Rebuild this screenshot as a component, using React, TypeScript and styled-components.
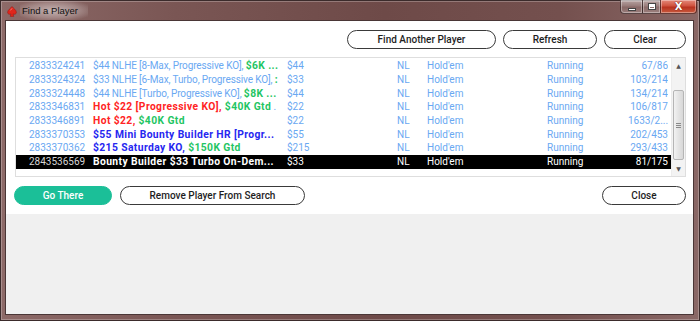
import React from 'react';
import styled, { createGlobalStyle } from 'styled-components';

const Global = createGlobalStyle`
  html, body { margin: 0; padding: 0; overflow: hidden; background: #6f4b4a; }
  #root { width: 700px; height: 321px; }
  * { box-sizing: border-box; }
`;

const Window = styled.div`
  width: 700px;
  height: 321px;
  display: flex;
  flex-direction: column;
  border: 1px solid #3b2b2b;
  background: linear-gradient(90deg, #8d6a68 0%, #7a5654 25%, #6e4a48 55%, #74504e 80%, #8a6866 100%);
  box-shadow: inset 0 0 0 1px rgba(255, 255, 255, 0.25);
`;

const TitleBar = styled.div`
  height: 19px;
  display: flex;
  align-items: flex-start;
  padding-left: 6px;
  padding-right: 2px;
`;

const TitleText = styled.span`
  font-family: "Liberation Sans", Arial, sans-serif;
  font-size: 9.5px;
  color: #111;
  line-height: 19px;
  margin-left: 3px;
  padding: 0 10px 0 2px;
  background: radial-gradient(ellipse at center, rgba(255,255,255,0.5) 0%, rgba(255,255,255,0.22) 55%, rgba(255,255,255,0) 85%);
`;

const Spade = styled.svg`
  width: 10px;
  height: 11px;
  margin-top: 5px;
`;

const Controls = styled.div`
  margin-left: auto;
  display: flex;
  height: 14px;
  margin-top: -1px;
`;

const CtrlButton = styled.div<{ $w: number; $close?: boolean }>`
  width: ${p => p.$w}px;
  height: 14px;
  display: flex;
  align-items: center;
  justify-content: center;
  border: 1px solid rgba(50, 30, 30, 0.7);
  border-top: none;
  margin-left: -1px;
  background: ${p => p.$close
    ? 'linear-gradient(180deg, #e4897a 0%, #d0533f 45%, #b8321f 55%, #c85a3e 100%)'
    : 'linear-gradient(180deg, rgba(255,255,255,0.45) 0%, rgba(255,255,255,0.2) 45%, rgba(255,255,255,0.08) 55%, rgba(255,255,255,0.2) 100%)'};
  border-radius: ${p => p.$close ? '0 0 4px 0' : '0'};
  &:first-child { border-radius: 0 0 0 4px; }
  box-shadow: inset 0 0 0 1px rgba(255,255,255,0.35);
`;

const MinGlyph = styled.div`
  width: 8px;
  height: 3px;
  margin-top: 5px;
  background: #fff;
  border: 1px solid #444;
`;

const MaxGlyph = styled.div`
  width: 8px;
  height: 7px;
  border: 1px solid #444;
  box-shadow: inset 0 0 0 1px #fff, inset 0 2px 0 1px #fff;
  background: transparent;
`;

const CloseGlyph = styled.span`
  font-family: "DejaVu Sans", sans-serif;
  font-weight: bold;
  font-size: 10px;
  color: #fff;
  line-height: 1;
  text-shadow: 0 0 1px #6a1a10, 0 0 1px #6a1a10;
`;

const Client = styled.div`
  flex: 1;
  display: flex;
  flex-direction: column;
  margin: 0 5px 5px 4px;
  border: 1px solid #4a3636;
  background: #f0f0f0;
`;

const Panel = styled.div`
  background: #ffffff;
  display: flex;
  flex-direction: column;
  padding: 9px 7px 9px 8px;
`;

const Toolbar = styled.div`
  display: flex;
  justify-content: flex-end;
  gap: 7px;
`;

const Footer = styled.div`
  display: flex;
  gap: 8px;
  margin-top: 9px;
`;

const PillButton = styled.button<{ $w: number; $primary?: boolean }>`
  width: ${p => p.$w}px;
  height: 19px;
  padding: 0;
  border-radius: 10px;
  border: 1px solid ${p => p.$primary ? '#1bbf98' : '#3a3a3a'};
  background: ${p => p.$primary ? '#1bbf98' : '#ffffff'};
  color: ${p => p.$primary ? '#ffffff' : '#1e1e1e'};
  font-family: Roboto, "Liberation Sans", sans-serif;
  font-weight: 500;
  font-size: 10px;
  line-height: 17px;
  text-align: center;
`;

const Spacer = styled.div`
  flex: 1;
`;

const ListBox = styled.div`
  margin: 8px 0 0 1px;
  height: 120px;
  border: 1px solid #dedede;
  display: flex;
  background: #fff;
`;

const Rows = styled.div`
  flex: 1;
  padding-top: 1px;
  display: flex;
  flex-direction: column;
`;

const Row = styled.div<{ $selected?: boolean }>`
  height: 13.7px;
  display: flex;
  align-items: center;
  white-space: nowrap;
  font-family: Roboto, "Liberation Sans", sans-serif;
  font-size: 10px;
  color: ${p => p.$selected ? '#ffffff' : '#6aa8f2'};
  background: ${p => p.$selected ? '#000000' : 'transparent'};
`;

const Cell = styled.div<{ $w: number; $pl?: number; $mr?: number; $right?: boolean; $dim?: boolean }>`
  width: ${p => p.$w}px;
  flex: none;
  padding-left: ${p => p.$pl ?? 0}px;
  margin-right: ${p => p.$mr ?? 0}px;
  overflow: hidden;
  text-align: ${p => p.$right ? 'right' : 'left'};
  color: ${p => p.$dim ? '#d6d6d6' : 'inherit'};
`;

const tones: Record<string, string> = {
  light: '#6aa8f2',
  green: '#1fc563',
  red: '#ff2424',
  blue: '#2626f0',
  white: '#ffffff',
};

const Seg = styled.span<{ $tone: string; $bold?: boolean }>`
  color: ${p => tones[p.$tone]};
  font-weight: ${p => p.$bold ? 700 : 400};
  font-size: ${p => p.$bold ? '10.3px' : 'inherit'};
  letter-spacing: ${p => p.$bold ? '0.4px' : '-0.12px'};
`;

const ScrollBar = styled.div`
  width: 14px;
  flex: none;
  display: flex;
  flex-direction: column;
  align-items: center;
  background: #f3f3f3;
  border-left: 1px solid #ececec;
`;

const Arrow = styled.div`
  height: 15px;
  display: flex;
  align-items: center;
  justify-content: center;
  font-family: "DejaVu Sans", sans-serif;
  font-size: 6px;
  color: #555;
`;

const Track = styled.div`
  flex: 1;
  width: 100%;
  display: flex;
  flex-direction: column;
  justify-content: flex-end;
  align-items: center;
  padding-bottom: 1px;
`;

const Thumb = styled.div`
  width: 11px;
  height: 70px;
  border: 1px solid #b5b5b5;
  border-radius: 2px;
  background: linear-gradient(90deg, #f2f2f2 0%, #e4e4e4 50%, #d8d8d8 100%);
  display: flex;
  align-items: center;
  justify-content: center;
`;

const Grip = styled.div`
  width: 5px;
  height: 5px;
  background: repeating-linear-gradient(180deg, #8a8a8a 0px, #8a8a8a 1px, transparent 1px, transparent 2px);
`;

type Part = { t: string; c: string; b?: boolean };
type Entry = { id: string; name: Part[]; buy: string; players: string; selected?: boolean };

const data: Entry[] = [
  { id: '2833324241', name: [{ t: '$44 NLHE [8-Max, Progressive KO], ', c: 'light' }, { t: '$6K ...', c: 'green', b: true }], buy: '$44', players: '67/86' },
  { id: '2833324324', name: [{ t: '$33 NLHE [6-Max, Turbo, Progressive KO], ', c: 'light' }, { t: ':', c: 'green', b: true }], buy: '$33', players: '103/214' },
  { id: '2833324448', name: [{ t: '$44 NLHE [Turbo, Progressive KO], ', c: 'light' }, { t: '$8K ...', c: 'green', b: true }], buy: '$44', players: '134/214' },
  { id: '2833346831', name: [{ t: 'Hot $22 [Progressive KO], ', c: 'red', b: true }, { t: '$40K Gtd', c: 'green', b: true }, { t: ' .', c: 'light' }], buy: '$22', players: '106/817' },
  { id: '2833346891', name: [{ t: 'Hot $22, ', c: 'red', b: true }, { t: '$40K Gtd', c: 'green', b: true }], buy: '$22', players: '1633/2...' },
  { id: '2833370353', name: [{ t: '$55 Mini Bounty Builder HR [Progr...', c: 'blue', b: true }], buy: '$55', players: '202/453' },
  { id: '2833370362', name: [{ t: '$215 Saturday KO, ', c: 'blue', b: true }, { t: '$150K Gtd', c: 'green', b: true }], buy: '$215', players: '293/433' },
  { id: '2843536569', name: [{ t: 'Bounty Builder $33 Turbo On-Dem...', c: 'white', b: true }], buy: '$33', players: '81/175', selected: true },
];

export default function App() {
  return (
    <>
      <Global />
      <Window>
        <TitleBar>
          <Spade viewBox="0 0 10 11">
            <path d="M5 0.5 C3.5 2.5 0.6 4 0.6 6.3 C0.6 8 2.4 8.9 4 7.9 L3.2 10.4 L6.8 10.4 L6 7.9 C7.6 8.9 9.4 8 9.4 6.3 C9.4 4 6.5 2.5 5 0.5 Z" fill="#e0261c" stroke="#9a1510" strokeWidth="0.5" />
            <path d="M3.4 4.4 C4 3.6 4.6 3 5 2.4" stroke="#ff9a90" strokeWidth="0.8" fill="none" />
          </Spade>
          <TitleText>Find a Player</TitleText>
          <Controls>
            <CtrlButton $w={23}><MinGlyph /></CtrlButton>
            <CtrlButton $w={19}><MaxGlyph /></CtrlButton>
            <CtrlButton $w={37} $close><CloseGlyph>X</CloseGlyph></CtrlButton>
          </Controls>
        </TitleBar>
        <Client>
          <Panel>
            <Toolbar>
              <PillButton $w={149}>Find Another Player</PillButton>
              <PillButton $w={94}>Refresh</PillButton>
              <PillButton $w={82}>Clear</PillButton>
            </Toolbar>
            <ListBox>
              <Rows>
                {data.map(r => (
                  <Row key={r.id} $selected={r.selected}>
                    <Cell $w={77} $pl={13} $dim={r.selected}>{r.id}</Cell>
                    <Cell $w={190} $mr={4}>
                      {r.name.map((p, i) => (
                        <Seg key={i} $tone={p.c} $bold={p.b}>{p.t}</Seg>
                      ))}
                    </Cell>
                    <Cell $w={110}>{r.buy}</Cell>
                    <Cell $w={30}>NL</Cell>
                    <Cell $w={120}>Hold'em</Cell>
                    <Cell $w={81}>Running</Cell>
                    <Cell $w={40} $right>{r.players}</Cell>
                  </Row>
                ))}
              </Rows>
              <ScrollBar>
                <Arrow>▲</Arrow>
                <Track>
                  <Thumb><Grip /></Thumb>
                </Track>
                <Arrow>▼</Arrow>
              </ScrollBar>
            </ListBox>
            <Footer>
              <PillButton $w={98} $primary>Go There</PillButton>
              <PillButton $w={185}>Remove Player From Search</PillButton>
              <Spacer />
              <PillButton $w={84}>Close</PillButton>
            </Footer>
          </Panel>
        </Client>
      </Window>
    </>
  );
}
